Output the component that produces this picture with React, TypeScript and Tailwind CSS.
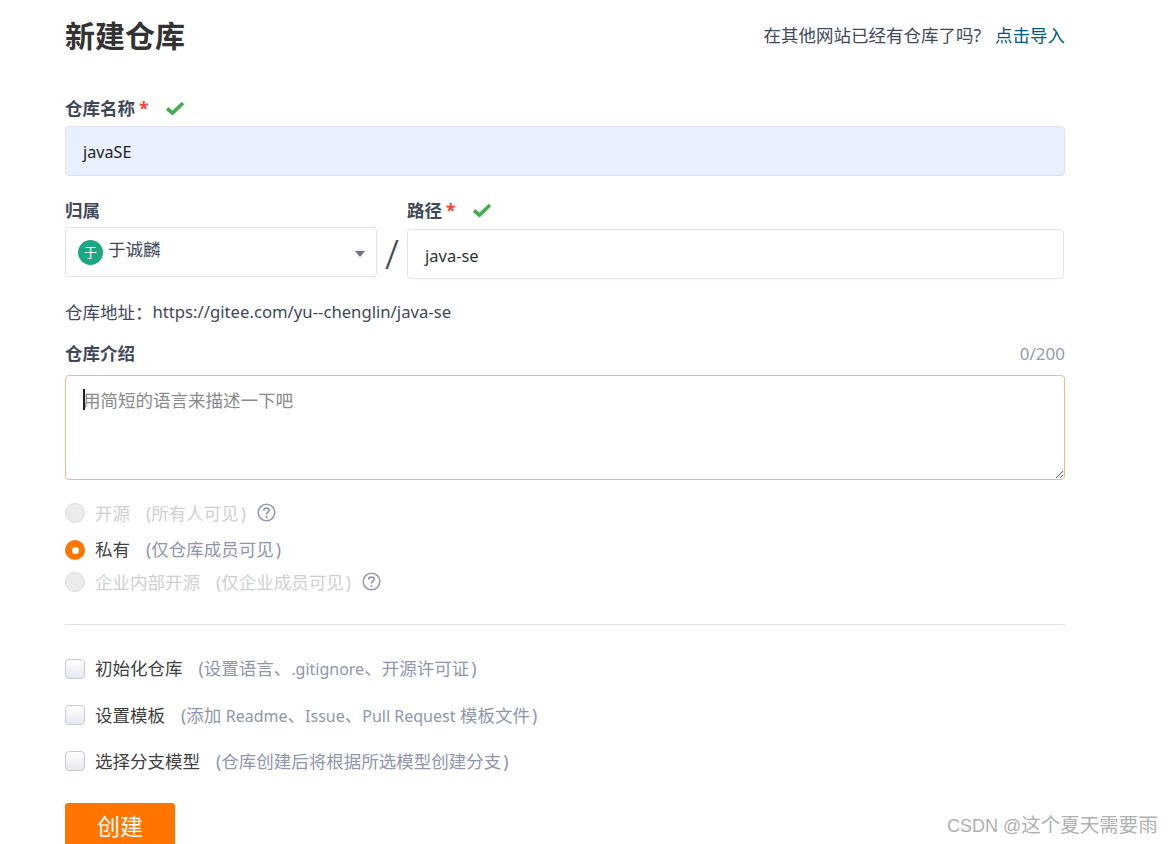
import React from "react";

const font = "font-['Noto_Sans','Noto_Sans_CJK_SC',sans-serif]";

function Check() {
  return (
    <svg width="20" height="16" viewBox="0 0 20 16" className="block">
      <path d="M2 8.5 L7.5 13 L18 3" fill="none" stroke="#43ad4f" strokeWidth="3.6" />
    </svg>
  );
}

function Help() {
  return (
    <svg width="19" height="19" viewBox="0 0 19 19" className="block">
      <circle cx="9.5" cy="9.5" r="8.3" fill="none" stroke="#9499b2" strokeWidth="1.5" />
      <path d="M6.8 7.4 C6.9 4.2 12.2 4.2 12.2 7.3 C12.2 9.2 9.5 9.2 9.5 11.4" fill="none" stroke="#8a8fa8" strokeWidth="1.6" />
      <circle cx="9.5" cy="13.9" r="1" fill="#8a8fa8" />
    </svg>
  );
}

function Radio({ state }: { state: "off" | "on" }) {
  if (state === "on") {
    return (
      <span className="flex h-5 w-5 shrink-0 items-center justify-center rounded-full bg-[#ff7500]">
        <span className="h-[7px] w-[7px] rounded-full bg-white" />
      </span>
    );
  }
  return <span className="h-5 w-5 shrink-0 rounded-full border border-[#dcdcdc] bg-[#ebebeb]" />;
}

function L({ children }: { children: React.ReactNode }) {
  return <span className="text-[16px]">{children}</span>;
}

function Hint({ children, className }: { children: React.ReactNode; className?: string }) {
  return (
    <span className={className}>
      (
      {children}
      <span className="ml-[2px]">)</span>
    </span>
  );
}

function Box({ label, hint, className, textClass = "" }: { label: string; hint: React.ReactNode; className: string; textClass?: string }) {
  return (
    <div className={`flex items-center ${className}`}>
      <span className="h-5 w-5 shrink-0 rounded-[4px] border border-[#c6c9d2] bg-gradient-to-b from-white to-[#e6e8f0]" />
      <span className={`ml-[10px] text-[#3f3f3f] ${textClass}`}>{label}</span>
      <Hint className={`ml-[16px] text-[#8f95ad] ${textClass}`}>{hint}</Hint>
    </div>
  );
}

export default function App() {
  return (
    <div className={`relative h-[844px] w-[1174px] overflow-hidden bg-white text-[17.5px] leading-[24px] ${font}`}>
      <div className="ml-[65px] w-[1000px]">
        <div className="flex h-[72px] items-center justify-between">
          <h1 className="text-[30px] font-bold leading-[40px] text-[#333]">新建仓库</h1>
          <div className="-translate-y-[1px]">
            <span className="text-[#40485b]">在其他网站已经有仓库了吗?</span>
            <span className="ml-[14px] text-[#005980]">点击导入</span>
          </div>
        </div>

        <div className="mt-[24px] flex h-[24px] items-center font-bold text-[#40485b]">
          仓库名称
          <span className="ml-[4px] text-[#f44336]">*</span>
          <span className="ml-[16px]"><Check /></span>
        </div>
        <div className="mt-[6px] flex h-[50px] items-center rounded-[4px] border border-[#dce3ee] bg-[#e8f0fe] pl-[17px] text-[#222]">
          <span className="translate-y-[1px] text-[16.2px]">javaSE</span>
        </div>

        <div className="mt-[22px] flex">
          <div className="w-[312px] shrink-0">
            <div className="flex h-[24px] items-center font-bold text-[#40485b]">归属</div>
            <div className="relative mt-[5px] flex h-[50px] items-center rounded-[4px] border border-[#dfe1e8] pl-[12px] text-[#40485b]">
              <span className="flex h-[25px] w-[25px] items-center justify-center rounded-full bg-[#1ba784] text-[13px] text-white">于</span>
              <span className="ml-[5px] -translate-y-[3px]">于诚麟</span>
              <svg width="10" height="6" viewBox="0 0 10 6" className="absolute right-[11px] top-[23px]">
                <path d="M0 0 H10 L5 6 Z" fill="#6c7285" />
              </svg>
            </div>
          </div>
          <div className="flex w-[30px] shrink-0 items-end justify-center pb-[0px] text-[40px] font-light leading-[50px] text-[#40485b]">/</div>
          <div className="min-w-0 flex-1">
            <div className="flex h-[24px] items-center font-bold text-[#40485b]">
              路径
              <span className="ml-[4px] text-[#f44336]">*</span>
              <span className="ml-[16px]"><Check /></span>
            </div>
            <div className="mt-[7px] mr-[1px] flex h-[50px] items-center rounded-[4px] border border-[#e3e5ec] pl-[17px] text-[#333]">
              <span className="translate-y-[2px] text-[16.5px]">java-se</span>
            </div>
          </div>
        </div>

        <div className="mt-[21px] flex h-[24px] items-center text-[#40485b]">
          <span>仓库地址{"\uFF1A"}</span>
          <span className="text-[16.7px]">https://gitee.com/yu--chenglin/java-se</span>
        </div>

        <div className="mt-[18px] flex h-[24px] items-center justify-between">
          <span className="-translate-y-[1px] font-bold text-[#40485b]">仓库介绍</span>
          <span className="text-[17px] text-[#9499b0]">0/200</span>
        </div>
        <div className="relative mt-[9px] h-[105px]">
          <textarea
            placeholder="用简短的语言来描述一下吧"
            className="block h-[105px] w-full rounded-[4px] border border-[#f2b882] py-[12px] pl-[17px] pr-[14px] text-[17.5px] leading-[24px] outline-none placeholder:text-[#8a8a8a]"
          />
          <span className="absolute left-[18px] top-[14px] h-[21px] w-[2px] bg-[#222]" />
        </div>

        <div className="mt-[21px] flex h-[24px] items-center text-[#cfcfcf]">
          <Radio state="off" />
          <span className="ml-[10px]">开源</span>
          <Hint className="ml-[16px]">所有人可见</Hint>
          <span className="ml-[11px] -translate-y-[1px]"><Help /></span>
        </div>
        <div className="mt-[13px] flex h-[24px] items-center">
          <Radio state="on" />
          <span className="ml-[10px] -translate-y-[1px] text-[#3f3f3f]">私有</span>
          <Hint className="ml-[16px] -translate-y-[1px] text-[#8f95ad]">仅仓库成员可见</Hint>
        </div>
        <div className="mt-[8px] flex h-[24px] items-center text-[#cfcfcf]">
          <Radio state="off" />
          <span className="ml-[10px]">企业内部开源</span>
          <Hint className="ml-[16px]">仅企业成员可见</Hint>
          <span className="ml-[11px] -translate-y-[1px]"><Help /></span>
        </div>

        <div className="mt-[30px] h-px bg-[#dfe1e8]" />

        <Box className="mt-[32px] h-[24px]" textClass="-translate-y-[1px]" label="初始化仓库" hint={<>设置语言、<L>.gitignore</L>、开源许可证</>} />
        <Box className="mt-[22px] h-[24px]" label="设置模板" hint={<>添加 <L>Readme</L>、<L>Issue</L>、<L>Pull Request</L> 模板文件</>} />
        <Box className="mt-[22px] h-[24px]" label="选择分支模型" hint="仓库创建后将根据所选模型创建分支" />

        <button className="mt-[30px] flex h-[50px] w-[110px] items-center justify-center rounded-[3px] bg-[#ff7500] pb-[4px] text-[23px] text-white">
          创建
        </button>
      </div>

      <div className="absolute left-[947px] top-[811px] whitespace-nowrap text-[19.5px] leading-[28px] text-[#b0b0b0] font-['Liberation_Sans','Noto_Sans_CJK_SC',sans-serif]">
        <span className="text-[18px]">CSDN @</span>这个夏天需要雨
      </div>
    </div>
  );
}
